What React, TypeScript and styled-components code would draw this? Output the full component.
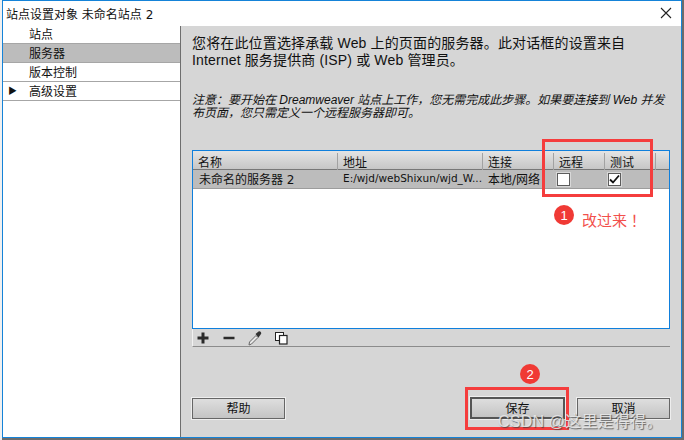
import styled, { createGlobalStyle } from "styled-components";

const GlobalStyle = createGlobalStyle`
    html, body {
        margin: 0;
        padding: 0;
        width: 684px;
        height: 440px;
        overflow: hidden;
        background: linear-gradient(to right, #f0f0f0 2px, #6c6c6c 2px);
    }
    * { box-sizing: border-box; }
`

const font = `"Liberation Sans", "Noto Sans CJK SC", sans-serif`

const Dialog = styled.div`
    position: relative;
    width: 680px;
    height: 438px;
    margin-left: 2px;
    border: 1px solid #1583d8;
    display: flex;
    flex-direction: column;
    font-family: ${font};
    color: #111;
    background: #fff;
`

const TitleBar = styled.div`
    height: 25px;
    flex: none;
    display: flex;
    align-items: center;
    justify-content: space-between;
    padding: 0 9px 1px 3px;
    font-size: 12px;
    font-family: "DejaVu Sans", "Noto Sans CJK SC", sans-serif;
`

const Body = styled.div`
    flex: 1;
    display: flex;
    min-height: 0;
`

const Sidebar = styled.div`
    width: 177px;
    flex: none;
    display: flex;
    flex-direction: column;
`

const NavRow = styled.div<{ $active?: boolean }>`
    height: 19px;
    flex: none;
    display: flex;
    align-items: center;
    padding: 0 0 2px 5px;
    font-size: 12px;
    border-bottom: 1px solid #a6a6a6;
    background: ${props => props.$active ? "#bcbcbc" : "#ffffff"};

    &:first-child {
        height: 18px;
    }
`

const Arrow = styled.span<{ $show?: boolean }>`
    width: 21px;
    font-size: 9px;
    visibility: ${props => props.$show ? "visible" : "hidden"};
`

const Main = styled.div`
    flex: 1;
    display: flex;
    flex-direction: column;
    background: #d6d6d6;
    border-left: 1px solid #6e6e6e;
    padding: 9px 0 0 11px;
`

const Intro = styled.p`
    margin: 0;
    height: 34px;
    flex: none;
    font-size: 14px;
    line-height: 17px;
    letter-spacing: 0.15px;
    white-space: nowrap;
`

const Note = styled.p`
    margin: 25px 0 0;
    height: 26px;
    flex: none;
    font-size: 12px;
    line-height: 13px;
    font-style: italic;
    white-space: nowrap;
`

const ServerTable = styled.div`
    margin-top: 30px;
    width: 478px;
    height: 179px;
    flex: none;
    display: flex;
    flex-direction: column;
    background: #fff;
    border: 1px solid #0f7fdc;
`

const columns = "144px 145px 71px 51px 51px 1fr"

const HeaderRow = styled.div`
    height: 19px;
    flex: none;
    display: grid;
    grid-template-columns: ${columns};
    background: linear-gradient(#e4e4e4, #c6c6c6);
    border-bottom: 1px solid #777;
`

const HeaderCell = styled.div<{ $first?: boolean }>`
    display: flex;
    align-items: center;
    font-size: 12px;
    padding: 0 0 3px 5px;
    border-left: ${props => props.$first ? "none" : "1px solid #a2a2a2"};
    margin: 2px 0;
`

const DataRow = styled.div`
    height: 19px;
    flex: none;
    display: grid;
    grid-template-columns: ${columns};
    background: #bcbcbc;
    border-bottom: 1px solid #9c9c9c;
`

const DataCell = styled.div<{ $small?: boolean }>`
    display: flex;
    align-items: center;
    padding: 0 0 2px 6px;
    font-size: ${props => props.$small ? "10.5px" : "12px"};
    font-family: "DejaVu Sans", "Noto Sans CJK SC", sans-serif;
    white-space: nowrap;
    overflow: hidden;
`

const CheckCell = styled.div`
    display: flex;
    align-items: center;
    padding-left: 4px;
`

const CheckBox = styled.div`
    width: 13px;
    height: 13px;
    background: #fff;
    border: 1px solid #5c5c5c;
    outline: 1px solid #d8d8d8;
    display: flex;
    align-items: center;
    justify-content: center;
`

const TableToolbar = styled.div`
    width: 478px;
    height: 18px;
    flex: none;
    display: flex;
    align-items: center;
    gap: 10px;
    padding-left: 2px;
    border-left: 1px solid #f2f2f2;
    border-bottom: 1px solid #8c8c8c;
`

const ToolIcon = styled.svg`
    width: 16px;
    height: 16px;
    display: block;
`

const Footer = styled.div`
    margin-top: 50px;
    width: 478px;
    display: flex;
    align-items: center;
    gap: 12px;
`

const Button = styled.div<{ $primary?: boolean }>`
    width: ${props => props.$primary ? "95px" : "93px"};
    height: ${props => props.$primary ? "22px" : "21px"};
    display: flex;
    align-items: center;
    justify-content: center;
    padding-bottom: 1px;
    font-size: 12px;
    background: linear-gradient(#dedede, #c4c4c4);
    border: ${props => props.$primary ? "2px solid #555" : "1px solid #666"};
    box-shadow: 0 0 0 1px #eeeeee;
`

const Spacer = styled.div`
    flex: 1;
`

const RedBox = styled.div<{ $l: number, $t: number, $w: number, $h: number }>`
    position: absolute;
    left: ${props => props.$l}px;
    top: ${props => props.$t}px;
    width: ${props => props.$w}px;
    height: ${props => props.$h}px;
    border: 3px solid #f53d3d;
`

const Badge = styled.div<{ $l: number, $t: number }>`
    position: absolute;
    left: ${props => props.$l}px;
    top: ${props => props.$t}px;
    width: 20px;
    height: 20px;
    border-radius: 50%;
    background: #f03a35;
    color: #fff;
    font-family: "Liberation Sans", sans-serif;
    font-size: 13px;
    display: flex;
    align-items: center;
    justify-content: center;
`

const Remark = styled.div`
    position: absolute;
    left: 579px;
    top: 209px;
    font-size: 15px;
    line-height: 20px;
    color: #f2504c;
    font-family: "Noto Sans CJK TC", sans-serif;
    white-space: nowrap;
`

const Watermark = styled.div`
    position: absolute;
    left: 495px;
    top: 411px;
    font-family: "Liberation Sans", "Noto Sans CJK SC", sans-serif;
    font-size: 16px;
    line-height: 20px;
    letter-spacing: 0.2px;
    color: rgba(232, 232, 232, 0.9);
    text-shadow: 1px 1px 1px rgba(60, 60, 60, 0.75);
    white-space: nowrap;
`

function CloseIcon() {
    return (
        <svg width="12" height="12" viewBox="0 0 12 12">
            <path d="M1 1 L11 11 M11 1 L1 11" stroke="#222" strokeWidth="1.1" fill="none" />
        </svg>
    )
}

function Check() {
    return (
        <svg width="11" height="11" viewBox="0 0 11 11">
            <path d="M1 5.5 L4 8.5 L10 1.5" stroke="#111" strokeWidth="1.8" fill="none" />
        </svg>
    )
}

export default function App() {
    return (
        <>
            <GlobalStyle />
            <Dialog>
                <TitleBar>
                    <span>站点设置对象 未命名站点 2</span>
                    <CloseIcon />
                </TitleBar>
                <Body>
                    <Sidebar>
                        <NavRow><Arrow />站点</NavRow>
                        <NavRow $active><Arrow />服务器</NavRow>
                        <NavRow><Arrow />版本控制</NavRow>
                        <NavRow><Arrow $show>▶</Arrow>高级设置</NavRow>
                    </Sidebar>
                    <Main>
                        <Intro>
                            您将在此位置选择承载 Web 上的页面的服务器。此对话框的设置来自<br />
                            Internet 服务提供商 (ISP) 或 Web 管理员。
                        </Intro>
                        <Note>
                            注意：要开始在 Dreamweaver 站点上工作，您无需完成此步骤。如果要连接到 Web 并发<br />
                            布页面，您只需定义一个远程服务器即可。
                        </Note>
                        <ServerTable>
                            <HeaderRow>
                                <HeaderCell $first>名称</HeaderCell>
                                <HeaderCell>地址</HeaderCell>
                                <HeaderCell>连接</HeaderCell>
                                <HeaderCell>远程</HeaderCell>
                                <HeaderCell>测试</HeaderCell>
                                <HeaderCell />
                            </HeaderRow>
                            <DataRow>
                                <DataCell>未命名的服务器 2</DataCell>
                                <DataCell $small>E:/wjd/webShixun/wjd_W...</DataCell>
                                <DataCell>本地/网络</DataCell>
                                <CheckCell><CheckBox /></CheckCell>
                                <CheckCell><CheckBox><Check /></CheckBox></CheckCell>
                            </DataRow>
                        </ServerTable>
                        <TableToolbar>
                            <ToolIcon viewBox="0 0 16 16">
                                <path d="M8 2.5 V13.5 M2.5 8 H13.5" stroke="#2a2a2a" strokeWidth="3" fill="none" />
                            </ToolIcon>
                            <ToolIcon viewBox="0 0 16 16">
                                <path d="M2.5 8 H13.5" stroke="#2a2a2a" strokeWidth="2.5" fill="none" />
                            </ToolIcon>
                            <ToolIcon viewBox="0 0 16 16">
                                <path d="M2 15 L2.5 12 L9 5.5 L11 7.5 L4.5 14 Z" fill="#e8e8e8" stroke="#666" strokeWidth="1" />
                                <path d="M8.5 4 L11.5 1.5 Q13 1 14 2.2 Q14.8 3.5 13.5 4.8 L11.5 7.5 Z" fill="#333" />
                            </ToolIcon>
                            <ToolIcon viewBox="0 0 16 16">
                                <rect x="2.5" y="2.5" width="8" height="8" fill="#fff" stroke="#222" />
                                <rect x="6.5" y="5.5" width="7.5" height="8.5" fill="#fff" stroke="#222" strokeWidth="1.2" />
                            </ToolIcon>
                        </TableToolbar>
                        <Footer>
                            <Button>帮助</Button>
                            <Spacer />
                            <Button $primary>保存</Button>
                            <Button>取消</Button>
                        </Footer>
                    </Main>
                </Body>
                <RedBox $l={539} $t={138} $w={111} $h={58} />
                <Badge $l={551} $t={204}>1</Badge>
                <Remark>改过来！</Remark>
                <RedBox $l={462} $t={386} $w={104} $h={43} />
                <Badge $l={517} $t={363}>2</Badge>
                <Watermark>CSDN @这里是得得。</Watermark>
            </Dialog>
        </>
    )
}
